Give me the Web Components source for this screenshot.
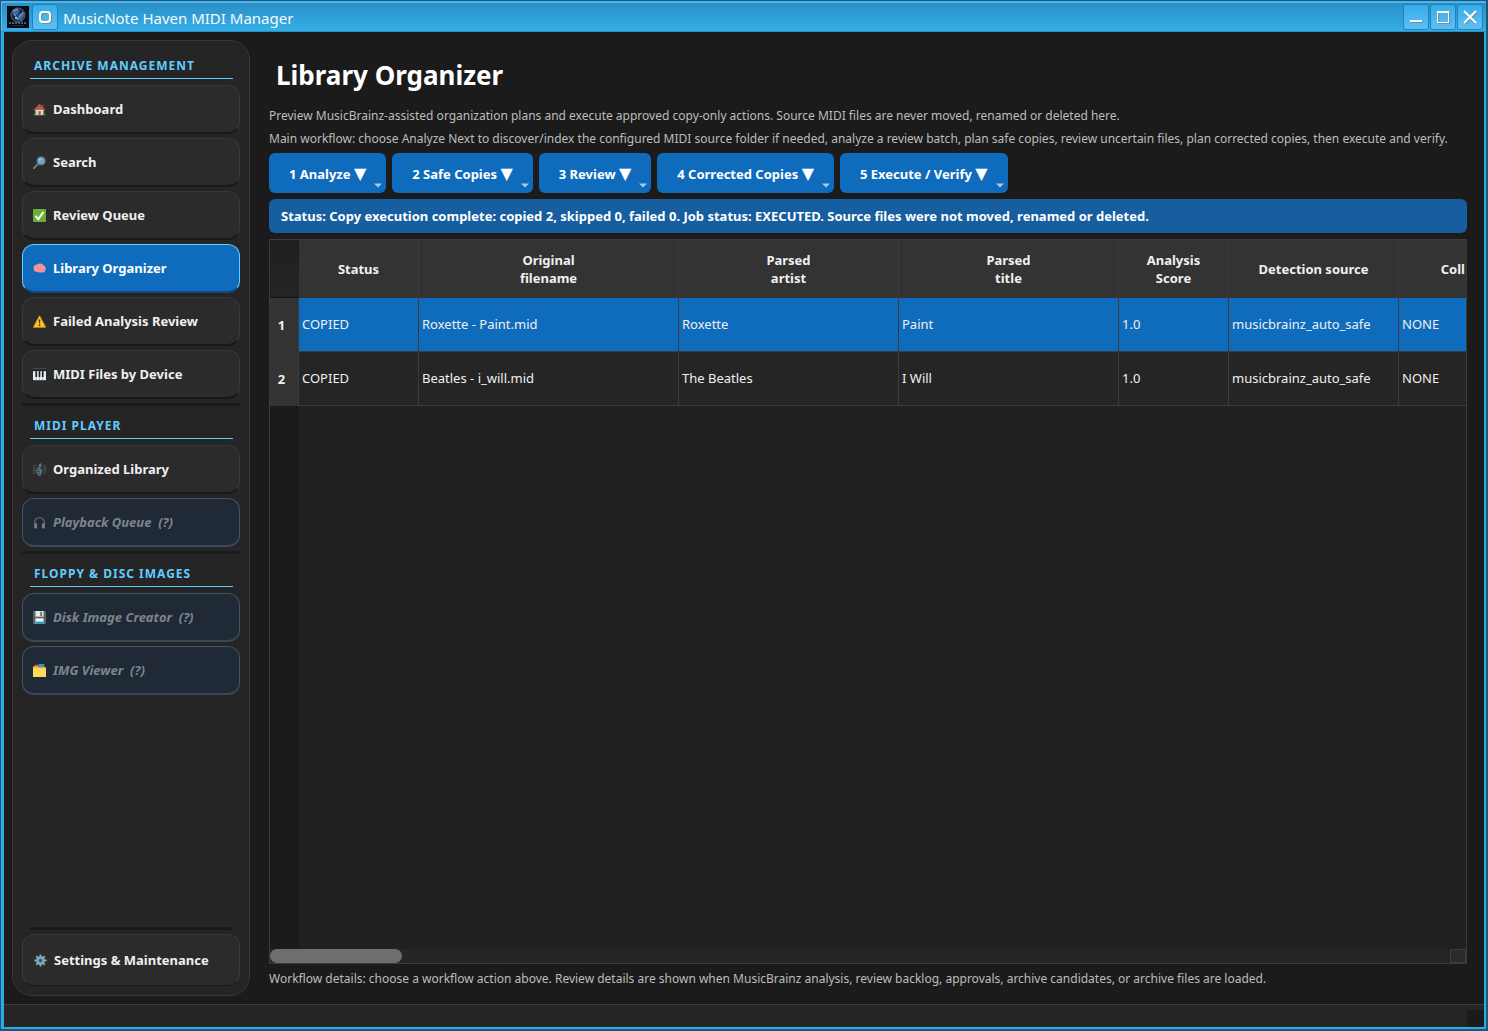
<!DOCTYPE html>
<html lang="en">
<head>
<meta charset="UTF-8">
<meta name="viewport" content="width=device-width, initial-scale=1.0">
<title>MusicNote Haven MIDI Manager</title>
<style>
  html, body {
    height: 100%;
    margin: 0;
  }
  body {
    font-family: "Noto Sans", "DejaVu Sans", sans-serif;
    font-size: 13px;
    color: #f0f0f0;
    background: #1b1b1b;
    --accent: #0f6cbd;
    --line: #3c3c3c;
  }
</style>
</head>
<body>

<mh-window caption="MusicNote Haven MIDI Manager">
  <mh-sidebar slot="sidebar">
    <mh-section caption="ARCHIVE MANAGEMENT">
      <mh-nav-item icon="home">Dashboard</mh-nav-item>
      <mh-nav-item icon="search">Search</mh-nav-item>
      <mh-nav-item icon="check">Review Queue</mh-nav-item>
      <mh-nav-item icon="brain" active>Library Organizer</mh-nav-item>
      <mh-nav-item icon="warning">Failed Analysis Review</mh-nav-item>
      <mh-nav-item icon="piano">MIDI Files by Device</mh-nav-item>
    </mh-section>
    <mh-section caption="MIDI PLAYER">
      <mh-nav-item icon="score">Organized Library</mh-nav-item>
      <mh-nav-item icon="headphones" disabled>Playback Queue&nbsp; (?)</mh-nav-item>
    </mh-section>
    <mh-section caption="FLOPPY &amp; DISC IMAGES">
      <mh-nav-item icon="floppy" disabled>Disk Image Creator&nbsp; (?)</mh-nav-item>
      <mh-nav-item icon="folders" disabled>IMG Viewer&nbsp; (?)</mh-nav-item>
    </mh-section>
    <mh-nav-item slot="footer" icon="gear" tall>Settings &amp; Maintenance</mh-nav-item>
  </mh-sidebar>

  <mh-page caption="Library Organizer">
    <mh-note>Preview MusicBrainz-assisted organization plans and execute approved copy-only actions. Source MIDI files are never moved, renamed or deleted here.</mh-note>
    <mh-note>Main workflow: choose Analyze Next to discover/index the configured MIDI source folder if needed, analyze a review batch, plan safe copies, review uncertain files, plan corrected copies, then execute and verify.</mh-note>
    <mh-toolbar>
      <mh-menu-button>1 Analyze</mh-menu-button>
      <mh-menu-button>2 Safe Copies</mh-menu-button>
      <mh-menu-button>3 Review</mh-menu-button>
      <mh-menu-button>4 Corrected Copies</mh-menu-button>
      <mh-menu-button>5 Execute / Verify</mh-menu-button>
    </mh-toolbar>
    <mh-status>Status: Copy execution complete: copied 2, skipped 0, failed 0. Job status: EXECUTED. Source files were not moved, renamed or deleted.</mh-status>
    <mh-plan-table></mh-plan-table>
    <mh-note>Workflow details: choose a workflow action above. Review details are shown when MusicBrainz analysis, review backlog, approvals, archive candidates, or archive files are loaded.</mh-note>
  </mh-page>
</mh-window>

<script>
const ICONS = {
  home: `<path d="M3 8h10v7H3z" fill="#e8ddd2"/><path d="M11 2h2v4h-2z" fill="#8d4a32"/><path d="M8 1L0.500 8.500l1.500 1L8 4l6 5.500 1.500-1z" fill="#c8502d"/><path d="M8 2.500L3 7.500h10z" fill="#b9583a"/><path d="M6.500 10h3v5h-3z" fill="#a8643c"/><path d="M4 10h2v2H4zM10 10h2v2h-2z" fill="#b9cfdc"/><path d="M1 13h3v2H1zM12 13h3v2h-3z" fill="#5b8c3e"/>`,
  search: `<path d="M6.500 9.500L1 15" stroke="#72787c" stroke-width="2.500" stroke-linecap="round"/><circle cx="10" cy="6" r="5" fill="#6fa6c4" stroke="#566c79" stroke-width="1.500"/><path d="M7.500 5.500a3 3 0 0 1 3-2.500" stroke="#b4dcee" stroke-width="1.200" fill="none"/>`,
  check: `<rect width="16" height="16" rx="1" fill="#6cae35"/><path d="M3 8.500l3.500 4L13 3.500" stroke="#fff" stroke-width="2.400" fill="none"/>`,
  brain: `<path d="M1 9C0 6 2 3 5 3c3-2 6-1 8 1 3 1 3 5 2 7-1 2-4 2-5 2-3 0-4-1-6-1-2 0-3-1-3-3z" fill="#f29a9c"/><path d="M3 8c2-2 3-1 4-2M6 10c2 1 3-2 5-2M9 4c0 2 2 1 3 3M11 11l3-2" stroke="#d9747c" stroke-width=".8" fill="none"/>`,
  warning: `<path d="M8 1l7.500 14H0.500z" fill="#fbc22d" stroke="#f2a600" stroke-linejoin="round"/><path d="M7 5.500h2l-.4 5H7.400z" fill="#3e3320"/><circle cx="8" cy="12.500" r="1.100" fill="#3e3320"/>`,
  piano: `<rect y="1" width="16" height="14" fill="#e9eef1"/><path d="M0 1h16v3H0z" fill="#23282b"/><path d="M3 4h2v7H3zM7 4h2v7H7zM11 4h2v7h-2z" fill="#15181a"/><path d="M4 11v4M8 11v4M12 11v4" stroke="#8a9094" stroke-width=".7"/>`,
  score: `<path d="M0 3.500h16M0 6.500h16M0 9.500h16M0 12.500h16" stroke="#4b5a63" stroke-width=".8"/><path d="M1 3v10M15 3v10" stroke="#4b5a63"/><path d="M8 15.500c-2 0-2-2-.5-2M8 15.500c2 0 1-3 0-13 0-2 2-2 1.500.5C9 6 4.500 7 4.500 10c0 3 6 3 6 0 0-2.500-3.500-2.500-3.500 0" fill="none" stroke="#5f7b8a" stroke-width="1.300"/>`,
  headphones: `<path d="M2 11V8a6 6 0 0 1 12 0v3" fill="none" stroke="#5f6468" stroke-width="1.700"/><rect x="1.500" y="9" width="3.500" height="6.500" rx="1.500" fill="#7a7d80"/><rect x="11" y="9" width="3.500" height="6.500" rx="1.500" fill="#7a7d80"/>`,
  floppy: `<path d="M0 0h15l1 1v15H0z" fill="#5c6266"/><path d="M3 0h10v7H3z" fill="#e4e7e9"/><path d="M9 1h2v5H9z" fill="#5c6266"/><path d="M3 9h10v7H3z" fill="#f2f5f6"/><path d="M3 13h10v3H3z" fill="#2f9bd0"/>`,
  folders: `<path d="M2 1h5v4H2z" fill="#e5643c"/><path d="M7 0h7v5H7z" fill="#3d93c9"/><path d="M0 3h6l1 1h9v12H0z" fill="#fbc934"/><path d="M0 6h16v10H0z" fill="#ffda5c"/>`,
  gear: `<path d="M8 0.500v15M0.500 8h15M2.700 2.700l10.600 10.600M13.300 2.700L2.700 13.300" stroke="#7ba3b4" stroke-width="2.400"/><circle cx="8" cy="8" r="4" fill="#5b7a88" stroke="#86b0c2" stroke-width="2.400"/><circle cx="8" cy="8" r="1.500" fill="#2e4650"/>`
};

class MhIcon extends HTMLElement {
  constructor() {
    super();
    this.attachShadow({ mode: 'open' });
  }
  connectedCallback() {
    this.shadowRoot.innerHTML = `
    <style>
      :host { display: block; flex: none; width: 13px; height: 13px; }
      svg { display: block; }
    </style>
    <svg width="13" height="13" viewBox="0 0 16 16" aria-hidden="true">${ICONS[this.getAttribute('name')]}</svg>
    `;
  }
}
customElements.define('mh-icon', MhIcon);


class MhNavItem extends HTMLElement {
  constructor() {
    super();
    this.attachShadow({ mode: 'open' });
  }
  connectedCallback() {
    const disabled = this.hasAttribute('disabled') ? 'disabled' : '';
    this.shadowRoot.innerHTML = `
    <style>
      :host { display: block; }
      button {
        display: flex;
        align-items: center;
        gap: 7px;
        box-sizing: border-box;
        width: 100%;
        height: 49px;
        padding: 0 10px;
        font: inherit;
        font-weight: 700;
        color: #f0f0f0;
        text-align: left;
        background: #2b2b2b;
        border: 1px solid #383838;
        border-bottom: 2px solid #191919;
        border-radius: 12px;
      }
      :host([tall]) button {
        height: 52px;
        padding: 0 11px;
        border-bottom-width: 1px;
      }
      :host([active]) button {
        color: #fff;
        background: var(--accent);
        border-color: #60cdff;
        border-bottom-color: #0b4a85;
      }
      :host([disabled]) button {
        font-style: italic;
        color: #7e848c;
        background: #202a36;
        border-color: #465263;
        border-bottom-color: #3a475a;
      }
    </style>
    <button type="button" ${disabled}>
      <mh-icon name="${this.getAttribute('icon')}"></mh-icon>
      <span><slot></slot></span>
    </button>
    `;
  }
}
customElements.define('mh-nav-item', MhNavItem);


class MhSection extends HTMLElement {
  constructor() {
    super();
    this.attachShadow({ mode: 'open' });
  }
  connectedCallback() {
    this.shadowRoot.innerHTML = `
    <style>
      :host { display: flex; flex-direction: column; gap: 4px; }
      h2 {
        margin: 0 7px 2px 8px;
        padding: 4px 4px 0;
        font-size: 12px;
        font-weight: 700;
        line-height: 24px;
        letter-spacing: 1px;
        color: #60cdff;
        border-bottom: 1px solid #60cdff;
      }
    </style>
    <h2>${this.getAttribute('caption').replace('&', '&amp;')}</h2>
    <slot></slot>
    `;
  }
}
customElements.define('mh-section', MhSection);


class MhSidebar extends HTMLElement {
  constructor() {
    super();
    this.attachShadow({ mode: 'open' }).innerHTML = `
    <style>
      :host {
        display: flex;
        flex-direction: column;
        gap: 4px;
        box-sizing: border-box;
        width: 238px;
        padding: 9px;
        background: #252525;
        border: 1px solid #383838;
        border-radius: 20px;
      }
      ::slotted(mh-section:not(:first-of-type)) {
        padding-top: 4px;
        border-top: 3px solid #1b1b1b;
      }
      hr {
        width: 202px;
        height: 3px;
        margin: auto 8px 0;
        background: #1b1b1b;
        border: 0;
      }
    </style>
    <slot></slot>
    <hr>
    <slot name="footer"></slot>
    `;
  }
}
customElements.define('mh-sidebar', MhSidebar);


class MhNote extends HTMLElement {
  constructor() {
    super();
    this.attachShadow({ mode: 'open' }).innerHTML = `
    <style>
      :host { display: block; }
      p { margin: 0; font-size: 12px; line-height: 17px; color: #bdbdbd; }
    </style>
    <p><slot></slot></p>
    `;
  }
}
customElements.define('mh-note', MhNote);


class MhToolbar extends HTMLElement {
  constructor() {
    super();
    this.attachShadow({ mode: 'open' }).innerHTML = `
    <style>
      :host { display: flex; flex-wrap: wrap; gap: 6px; }
    </style>
    <slot></slot>
    `;
  }
}
customElements.define('mh-toolbar', MhToolbar);


class MhMenuButton extends HTMLElement {
  constructor() {
    super();
    this.attachShadow({ mode: 'open' }).innerHTML = `
    <style>
      :host { display: block; position: relative; }
      button {
        height: 40px;
        padding: 2px 20px 0;
        font: inherit;
        font-weight: 700;
        line-height: 18px;
        color: #fff;
        background: var(--accent);
        border: 0;
        border-radius: 6px;
      }
      .arrow { font-family: "DejaVu Sans", sans-serif; font-size: 16px; line-height: 1; }
      /* menu indicator in the button corner */
      svg { position: absolute; right: 4px; bottom: 5px; }
    </style>
    <button type="button" aria-haspopup="menu"><slot></slot> <span class="arrow">▼</span></button>
    <svg width="8" height="5" viewBox="0 0 8 5" aria-hidden="true"><path d="M0 0.500h8L4 4.500z" fill="#a9cbe9"/></svg>
    `;
  }
}
customElements.define('mh-menu-button', MhMenuButton);


class MhStatus extends HTMLElement {
  constructor() {
    super();
    this.attachShadow({ mode: 'open' }).innerHTML = `
    <style>
      :host {
        display: block;
        padding: 0 12px;
        font-weight: 700;
        line-height: 34px;
        color: #fff;
        background: #165e9f;
        border-radius: 6px;
      }
    </style>
    <div role="status"><slot></slot></div>
    `;
  }
}
customElements.define('mh-status', MhStatus);


const COLUMNS = [
  ['Status', 120],
  ['Original<br>filename', 260],
  ['Parsed<br>artist', 220],
  ['Parsed<br>title', 220],
  ['Analysis<br>Score', 110],
  ['Detection source', 170],
  ['Coll', 0]
];
const ROWS = [
  ['COPIED', 'Roxette - Paint.mid', 'Roxette', 'Paint', '1.0', 'musicbrainz_auto_safe', 'NONE'],
  ['COPIED', 'Beatles - i_will.mid', 'The Beatles', 'I Will', '1.0', 'musicbrainz_auto_safe', 'NONE']
];

class MhPlanTable extends HTMLElement {
  constructor() {
    super();
    const cols = COLUMNS.map(([, w]) => w ? `<col style="width: ${w}px">` : '<col>').join('');
    const head = COLUMNS.map(([label]) => `<th scope="col">${label}</th>`).join('');
    const body = ROWS.map((row, i) => `
      <tr class="${i === 0 ? 'selected' : ''}">
        <th scope="row">${i + 1}</th>
        ${row.map(cell => `<td>${cell}</td>`).join('')}
      </tr>`).join('');

    this.attachShadow({ mode: 'open' }).innerHTML = `
    <style>
      :host {
        display: flex;
        flex-direction: column;
        flex: 1;
        min-height: 0;
        border: 1px solid var(--line);
        overflow: hidden;
      }
      .view {
        flex: 1;
        min-height: 0;
        overflow: hidden;
        background: linear-gradient(90deg, #1b1b1b 29px, #202020 29px);
      }
      table {
        width: 100%;
        table-layout: fixed;
        border-collapse: separate;
        border-spacing: 0;
      }
      th, td {
        box-sizing: border-box;
        padding: 0 3px;
        line-height: 18px;
        white-space: nowrap;
        border-right: 1px solid var(--line);
      }
      th { font-weight: 700; background: #333; }
      thead th { height: 58px; }
      thead td {
        padding: 0;
        background: linear-gradient(#1f1f1f, #242424);
        border-right: 0;
        border-bottom: 1px solid #111;
      }
      tbody th { padding: 0 5px 0 0; }
      tbody th, tbody td { height: 54px; }
      tbody td {
        padding-bottom: 2px;
        text-align: left;
        background: #252525;
        border-bottom: 1px solid var(--line);
      }
      .selected td { background: var(--accent); }
      th:last-child { padding-right: 1px; text-align: right; }
      th:last-child, td:last-child { border-right: 0; }
      .scroll {
        display: flex;
        justify-content: space-between;
        height: 14px;
        background: #252525;
      }
      .thumb { width: 132px; background: #6e6e6e; border-radius: 7px; }
      .end {
        box-sizing: border-box;
        width: 16px;
        background: #2b2b2b;
        border: 1px solid var(--line);
      }
    </style>
    <div class="view">
      <table>
        <colgroup><col style="width: 29px">${cols}</colgroup>
        <thead><tr><td></td>${head}</tr></thead>
        <tbody>${body}</tbody>
      </table>
    </div>
    <div class="scroll"><div class="thumb"></div><div class="end"></div></div>
    `;
  }
}
customElements.define('mh-plan-table', MhPlanTable);


class MhPage extends HTMLElement {
  constructor() {
    super();
    this.attachShadow({ mode: 'open' });
  }
  connectedCallback() {
    this.shadowRoot.innerHTML = `
    <style>
      :host {
        display: flex;
        flex-direction: column;
        gap: 6px;
        flex: 1;
        min-width: 0;
        padding: 9px;
      }
      h1 {
        margin: 0;
        padding: 1px 7px;
        font-size: 26px;
        font-weight: 700;
        line-height: 50px;
        color: #fff;
      }
    </style>
    <h1>${this.getAttribute('caption')}</h1>
    <slot></slot>
    `;
  }
}
customElements.define('mh-page', MhPage);


class MhWindow extends HTMLElement {
  constructor() {
    super();
    this.attachShadow({ mode: 'open' });
  }
  connectedCallback() {
    this.shadowRoot.innerHTML = `
    <style>
      :host {
        display: flex;
        flex-direction: column;
        box-sizing: border-box;
        height: 100vh;
        padding: 1px 2px 2px 1px;
        background: #1b5878;
      }
      header {
        display: flex;
        align-items: center;
        gap: 1px;
        box-sizing: border-box;
        height: 31px;
        padding: 0 3px 0 5px;
        background: linear-gradient(#2b8fc5, #35aee8);
        border-top: 2px solid #4cb4ea;
        border-left: 1px solid #5cc0f0;
        border-bottom: 1px solid #2590c6;
      }
      .logo { margin-right: 2px; }
      .caption {
        flex: 1;
        padding: 2px 0 0 4px;
        font-size: 15px;
        line-height: 20px;
        color: #f4fbff;
      }
      button {
        display: grid;
        place-items: center;
        box-sizing: border-box;
        width: 26px;
        height: 26px;
        padding: 0;
        background: linear-gradient(#35ade9, #5cc0f8);
        border: 1px solid #2583b4;
        border-radius: 3px;
      }
      svg { display: block; }
      .content {
        display: flex;
        gap: 10px;
        flex: 1;
        min-height: 0;
        padding: 8px;
        background: #1b1b1b;
        border: solid #2fa9e4;
        border-width: 0 2px 0 3px;
      }
      footer {
        display: flex;
        justify-content: flex-end;
        align-items: flex-end;
        height: 23px;
        background: #252525;
        border: solid #2fa9e4;
        border-width: 0 2px 2px 3px;
        box-shadow: inset 0 1px var(--line);
      }
      .grip { width: 17px; height: 17px; background: #1b1b1b; }
    </style>
    <header>
      <svg class="logo" width="22" height="22" viewBox="0 0 22 22" aria-hidden="true">
        <rect width="22" height="22" fill="#060a12"/>
        <circle cx="11" cy="9" r="7" fill="#14294a" stroke="#5d6c80"/>
        <path d="M5 6l4-3 4 1-2 4-4 2zM12 8l5-2 0 4-3 5-3-3z" fill="#3a679c"/>
        <path d="M6 5l5-2M7 8l4 5 5-7M8 12l4 2" stroke="#93a9c4" fill="none"/>
        <path d="M10 6l2 8" stroke="#2a70d0" fill="none"/>
        <circle cx="9" cy="12" r="1" fill="#b9c8d8"/>
        <path d="M2 17h18" stroke="#4a5a70" stroke-width="2" stroke-dasharray="2 1"/>
        <path d="M5 19.500h12" stroke="#222e3e"/>
      </svg>
      <button type="button" aria-label="Window menu">
        <svg width="14" height="14" viewBox="0 0 14 14" fill="none" stroke-width="2"><rect x="3" y="3" width="10" height="10" rx="3" stroke="#85878a"/><rect x="2" y="2" width="10" height="10" rx="3" stroke="#fff"/></svg>
      </button>
      <span class="caption">${this.getAttribute('caption')}</span>
      <button type="button" aria-label="Minimize">
        <svg width="14" height="14" viewBox="0 0 14 14"><path d="M2 12h12" stroke="#85878a" stroke-width="2"/><path d="M1 11h12" stroke="#fff" stroke-width="2"/></svg>
      </button>
      <button type="button" aria-label="Maximize">
        <svg width="14" height="14" viewBox="0 0 14 14"><rect x="2.500" y="2.500" width="11" height="11" fill="none" stroke="#85878a"/><path d="M1 2h12" stroke="#fff" stroke-width="2"/><rect x="1.500" y="1.500" width="11" height="11" fill="none" stroke="#fff"/></svg>
      </button>
      <button type="button" aria-label="Close">
        <svg width="14" height="14" viewBox="0 0 14 14" fill="none" stroke-width="2"><path d="M2 3l11 11M13 3L2 14" stroke="#85878a"/><path d="M1 1l12 12M13 1L1 13" stroke="#fff"/></svg>
      </button>
    </header>
    <div class="content">
      <slot name="sidebar"></slot>
      <slot></slot>
    </div>
    <footer><div class="grip"></div></footer>
    `;
  }
}
customElements.define('mh-window', MhWindow);
</script>
</body>
</html>
